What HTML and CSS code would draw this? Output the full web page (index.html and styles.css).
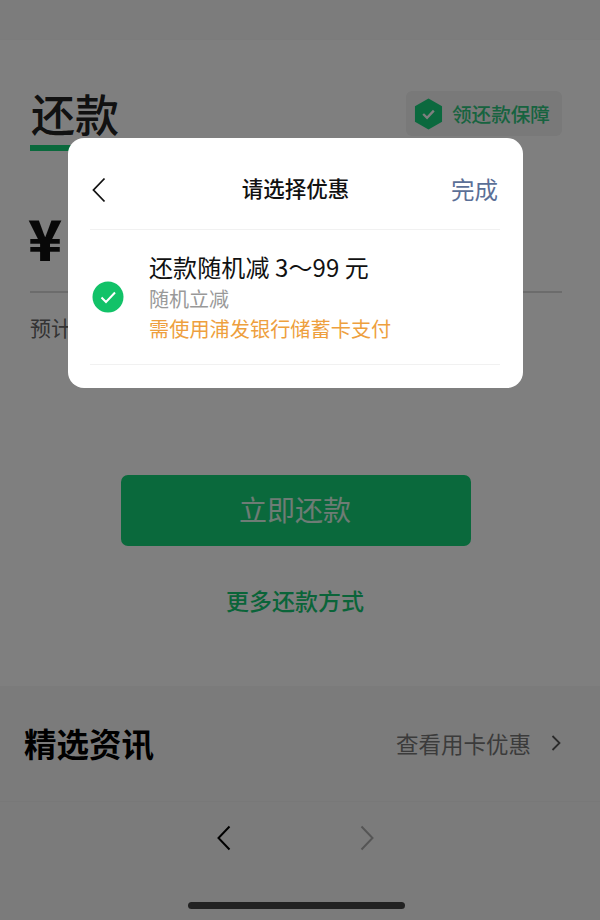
FILE: index.html
```html
<!DOCTYPE html>
<html lang="zh">
<head>
    <meta charset="utf-8">
    <title>还款</title>
    <link rel="stylesheet" href="styles.css">
</head>
<body>
    <div class="page">
        <div class="top-bar"></div>

        <section class="repay">
            <div class="repay-head">
                <div class="tab">
                    <h1 class="tab-title">还款</h1>
                    <div class="tab-line"></div>
                </div>
                <div class="guard">
                    <svg class="guard-icon" viewBox="0 0 30 33">
                        <path d="M15 0.5L29 8.5V24.5L15 32.5L1 24.5V8.5Z" fill="#16d27c"/>
                        <path d="M9.5 16.5L13.5 20.5L20.5 13" fill="none" stroke="#fff" stroke-width="2.4"/>
                    </svg>
                    <span class="guard-text">领还款保障</span>
                </div>
            </div>

            <div class="amount">¥</div>
            <div class="estimate">预计还款</div>

            <div class="pay-btn"><span>立即还款</span></div>
            <div class="more">更多还款方式</div>
        </section>

        <section class="news">
            <h2 class="news-title">精选资讯</h2>
            <div class="news-link">
                <span>查看用卡优惠</span>
                <svg class="news-arrow" viewBox="0 0 10 16">
                    <path d="M1.5 1L8.5 8L1.5 15" fill="none" stroke="#555" stroke-width="1.8"/>
                </svg>
            </div>
        </section>

        <nav class="browser-nav">
            <svg class="nav-arrow" viewBox="0 0 14 26">
                <path d="M12.5 1.5L1.5 13L12.5 24.5" fill="none" stroke="#000" stroke-width="2"/>
            </svg>
            <svg class="nav-arrow" viewBox="0 0 14 26">
                <path d="M1.5 1.5L12.5 13L1.5 24.5" fill="none" stroke="#aaa" stroke-width="2"/>
            </svg>
        </nav>

        <div class="home-bar"></div>
    </div>

    <div class="mask"></div>

    <div class="dialog">
        <div class="dialog-head">
            <svg class="dialog-back" viewBox="0 0 14 26">
                <path d="M12.5 1.5L1.5 13L12.5 24.5" fill="none" stroke="#111" stroke-width="1.8"/>
            </svg>
            <div class="dialog-title">请选择优惠</div>
            <div class="dialog-done">完成</div>
        </div>
        <div class="offer">
            <svg class="offer-check" viewBox="0 0 32 32">
                <circle cx="16" cy="16" r="15.5" fill="#12c268"/>
                <path d="M9.5 16.5L14 21L23 11.5" fill="none" stroke="#fff" stroke-width="2"/>
            </svg>
            <div class="offer-text">
                <div class="offer-name">还款随机减 3～99 元</div>
                <div class="offer-type">随机立减</div>
                <div class="offer-note">需使用浦发银行储蓄卡支付</div>
            </div>
        </div>
    </div>
</body>
</html>
```

FILE: styles.css
```css
* {
    box-sizing: border-box;
}

html, body {
    margin: 0;
    padding: 0;
}

body {
    width: 600px;
    height: 920px;
    overflow: hidden;
    position: relative;
    font-family: "Noto Sans CJK SC", "Noto Sans", sans-serif;
    background-color: #fff;
}

.page {
    height: 920px;
    display: flex;
    flex-direction: column;
}

/* top */
.top-bar {
    height: 40px;
    background-color: #f9f9f9;
    border-bottom: 1px solid #f6f6f6;
}

.repay {
    height: 647px;
    padding: 51px 38px 0 30px;
    border-bottom: 1px solid #f6f6f6;
}

.repay-head {
    display: flex;
    justify-content: space-between;
    align-items: flex-start;
}

.tab {
    width: 100px;
}

.tab-title {
    margin: -2px 0 0 1px;
    font-size: 44px;
    line-height: 48px;
    font-weight: 500;
    color: #222;
}

.tab-line {
    height: 6px;
    margin-top: 8px;
    background-color: #14d278;
}

.guard {
    width: 156px;
    height: 45px;
    padding-left: 8px;
    display: flex;
    align-items: center;
    gap: 9px;
    border-radius: 6px;
    background-color: #f2f2f2;
}

.guard-icon {
    width: 29px;
    height: 32px;
}

.guard-text {
    font-size: 19.6px;
    font-weight: 500;
    color: #2fc77e;
}

/* amount */
.amount {
    height: 94px;
    margin-top: 48px;
    padding-top: 8px;
    border-bottom: 2px solid #d8d8d8;
    font-size: 56px;
    line-height: 60px;
    font-weight: 900;
    color: #111;
    text-indent: -2px;
}

.estimate {
    margin-top: 19px;
    font-size: 21px;
    line-height: 30px;
    color: #666;
}

.pay-btn {
    width: 350px;
    height: 71px;
    margin: 133px 0 0 91px;
    display: flex;
    align-items: center;
    justify-content: center;
    border-radius: 7px;
    background-color: #14d278;
}

.pay-btn span {
    font-size: 28px;
    margin: -4px 0 0 -2px;
    color: #fff;
    opacity: 0.85;
}

.more {
    width: 350px;
    margin: 37px 0 0 90px;
    text-align: center;
    font-size: 23px;
    line-height: 34px;
    font-weight: 500;
    color: #14c873;
}

/* news */
.news {
    height: 115px;
    padding: 0 39px 0 24px;
    display: flex;
    justify-content: space-between;
    align-items: center;
    background-color: #f7f7f7;
    border-bottom: 1px solid #f1f1f1;
}

.news-title {
    margin: -3px 0 0 0;
    font-size: 32.5px;
    font-weight: 700;
    color: #000;
}

.news-link {
    display: flex;
    align-items: center;
    gap: 20px;
    margin-top: -3px;
    font-size: 22.5px;
    color: #777;
}

.news-arrow {
    width: 10px;
    height: 16px;
}

.browser-nav {
    height: 72px;
    padding-left: 217px;
    display: flex;
    align-items: center;
    gap: 129px;
    background-color: #f7f7f7;
}

.nav-arrow {
    width: 14px;
    height: 26px;
}

.home-bar {
    flex: 1;
    background-color: #f7f7f7;
    position: relative;
}

.home-bar::after {
    content: "";
    position: absolute;
    left: 188px;
    top: 28px;
    width: 217px;
    height: 7px;
    border-radius: 4px;
    background-color: #444;
}

/* overlay */
.mask {
    position: absolute;
    inset: 0;
    background-color: rgba(0, 0, 0, 0.5);
}

.dialog {
    position: absolute;
    left: 68px;
    top: 138px;
    width: 455px;
    height: 250px;
    padding: 0 23px 0 22px;
    border-radius: 16px;
    background-color: #fff;
}

.dialog-head {
    height: 92px;
    display: flex;
    align-items: center;
    justify-content: space-between;
    padding: 12px 2px 0 2px;
    border-bottom: 1px solid #f1f1f1;
    position: relative;
}

.dialog-back {
    width: 14px;
    height: 26px;
    margin-top: 0;
}

.dialog-title {
    position: absolute;
    left: 1px;
    right: 0;
    top: 34px;
    text-align: center;
    font-size: 21.5px;
    line-height: 32px;
    font-weight: 500;
    color: #111;
}

.dialog-done {
    font-size: 23.5px;
    line-height: 34px;
    margin-top: -1px;
    color: #5b6f97;
}

.offer {
    height: 135px;
    padding-left: 2px;
    display: flex;
    align-items: center;
    gap: 25px;
    border-bottom: 1px solid #f1f1f1;
}

.offer-check {
    width: 32px;
    height: 32px;
}

.offer-text {
    margin-top: 0;
}

.offer-name {
    font-size: 24px;
    line-height: 34px;
    letter-spacing: 0.1px;
    color: #111;
}

.offer-type {
    font-size: 20px;
    line-height: 30px;
    color: #999;
}

.offer-note {
    font-size: 20.2px;
    line-height: 30px;
    color: #ee9f3e;
}
```
